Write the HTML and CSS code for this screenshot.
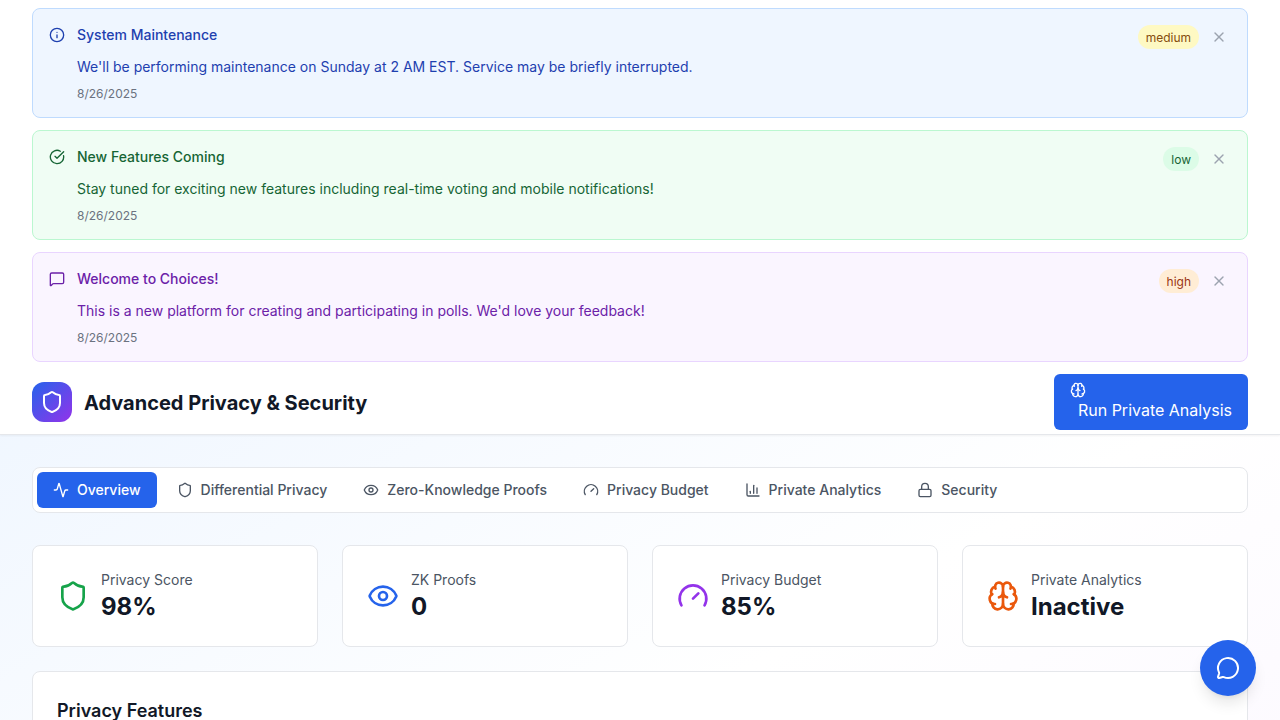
FILE: index.html
```html
<!DOCTYPE html>
<html lang="en">
<head>
<meta charset="utf-8">
<title>Advanced Privacy &amp; Security</title>
<link rel="stylesheet" href="styles.css">
</head>
<body>
<svg class="sprite" xmlns="http://www.w3.org/2000/svg">
  <symbol id="info" viewBox="0 0 24 24"><circle cx="12" cy="12" r="10"/><path d="M12 16v-4"/><path d="M12 8h.01"/></symbol>
  <symbol id="check" viewBox="0 0 24 24"><path d="M21.801 10A10 10 0 1 1 17 3.335"/><path d="m9 11 3 3L22 4"/></symbol>
  <symbol id="message" viewBox="0 0 24 24"><path d="M22 17a2 2 0 0 1-2 2H6.828a2 2 0 0 0-1.414.586l-2.202 2.202A.71.71 0 0 1 2 21.286V5a2 2 0 0 1 2-2h16a2 2 0 0 1 2 2z"/></symbol>
  <symbol id="chat" viewBox="0 0 24 24"><path d="M2.992 16.342a2 2 0 0 1 .094 1.167l-1.065 3.29a1 1 0 0 0 1.236 1.168l3.413-.998a2 2 0 0 1 1.099.092 10 10 0 1 0-4.777-4.719"/></symbol>
  <symbol id="x" viewBox="0 0 24 24"><path d="M18 6 6 18"/><path d="m6 6 12 12"/></symbol>
  <symbol id="shield" viewBox="0 0 24 24"><path d="M20 13c0 5-3.5 7.5-7.66 8.95a1 1 0 0 1-.67-.01C7.5 20.5 4 18 4 13V6a1 1 0 0 1 1-1c2 0 4.5-1.2 6.24-2.72a1.17 1.17 0 0 1 1.52 0C14.51 3.81 17 5 19 5a1 1 0 0 1 1 1z"/></symbol>
  <symbol id="brain" viewBox="0 0 24 24"><path d="M12 18V5"/><path d="M15 13a4.17 4.17 0 0 1-3-4 4.17 4.17 0 0 1-3 4"/><path d="M17.598 6.5A3 3 0 1 0 12 5a3 3 0 1 0-5.598 1.5"/><path d="M17.997 5.125a4 4 0 0 1 2.526 5.77"/><path d="M18 18a4 4 0 0 0 2-7.464"/><path d="M19.967 17.483A4 4 0 1 1 12 18a4 4 0 1 1-7.967-.517"/><path d="M6 18a4 4 0 0 1-2-7.464"/><path d="M6.003 5.125a4 4 0 0 0-2.526 5.77"/></symbol>
  <symbol id="activity" viewBox="0 0 24 24"><path d="M22 12h-2.48a2 2 0 0 0-1.93 1.46l-2.35 8.36a.25.25 0 0 1-.48 0L9.24 2.18a.25.25 0 0 0-.48 0l-2.35 8.36A2 2 0 0 1 4.49 12H2"/></symbol>
  <symbol id="eye" viewBox="0 0 24 24"><path d="M2.062 12.348a1 1 0 0 1 0-.696 10.75 10.75 0 0 1 19.876 0 1 1 0 0 1 0 .696 10.75 10.75 0 0 1-19.876 0"/><circle cx="12" cy="12" r="3"/></symbol>
  <symbol id="gauge" viewBox="0 0 24 24"><path d="m12 14 4-4"/><path d="M3.34 19a10 10 0 1 1 17.32 0"/></symbol>
  <symbol id="chart" viewBox="0 0 24 24"><path d="M3 3v16a2 2 0 0 0 2 2h16"/><path d="M18 17V9"/><path d="M13 17V5"/><path d="M8 17v-3"/></symbol>
  <symbol id="lock" viewBox="0 0 24 24"><rect width="18" height="11" x="3" y="11" rx="2"/><path d="M7 11V7a5 5 0 0 1 10 0v4"/></symbol>
</svg>

<section class="alerts">
  <article class="alert alert-blue">
    <svg class="icon alert-icon"><use href="#info"/></svg>
    <div class="alert-body">
      <h3>System Maintenance</h3>
      <p>We'll be performing maintenance on Sunday at 2 AM EST. Service may be briefly interrupted.</p>
      <time>8/26/2025</time>
    </div>
    <div class="alert-actions"><span class="badge badge-medium">medium</span><button class="close"><svg class="icon"><use href="#x"/></svg></button></div>
  </article>
  <article class="alert alert-green">
    <svg class="icon alert-icon"><use href="#check"/></svg>
    <div class="alert-body">
      <h3>New Features Coming</h3>
      <p>Stay tuned for exciting new features including real-time voting and mobile notifications!</p>
      <time>8/26/2025</time>
    </div>
    <div class="alert-actions"><span class="badge badge-low">low</span><button class="close"><svg class="icon"><use href="#x"/></svg></button></div>
  </article>
  <article class="alert alert-purple">
    <svg class="icon alert-icon"><use href="#message"/></svg>
    <div class="alert-body">
      <h3>Welcome to Choices!</h3>
      <p>This is a new platform for creating and participating in polls. We'd love your feedback!</p>
      <time>8/26/2025</time>
    </div>
    <div class="alert-actions"><span class="badge badge-high">high</span><button class="close"><svg class="icon"><use href="#x"/></svg></button></div>
  </article>
</section>

<div class="page">
  <header class="header">
    <div class="brand">
      <div class="logo"><svg class="icon icon-md"><use href="#shield"/></svg></div>
      <h1>Advanced Privacy &amp; Security</h1>
    </div>
    <button class="run"><svg class="icon"><use href="#brain"/></svg><span>Run Private Analysis</span></button>
  </header>

  <main class="content">
    <nav class="tabs">
      <button class="tab active"><svg class="icon"><use href="#activity"/></svg><span>Overview</span></button>
      <button class="tab"><svg class="icon"><use href="#shield"/></svg><span>Differential Privacy</span></button>
      <button class="tab"><svg class="icon"><use href="#eye"/></svg><span>Zero-Knowledge Proofs</span></button>
      <button class="tab"><svg class="icon"><use href="#gauge"/></svg><span>Privacy Budget</span></button>
      <button class="tab"><svg class="icon"><use href="#chart"/></svg><span>Private Analytics</span></button>
      <button class="tab"><svg class="icon"><use href="#lock"/></svg><span>Security</span></button>
    </nav>

    <div class="stats">
      <div class="card stat"><svg class="icon icon-lg green"><use href="#shield"/></svg><div><p class="label">Privacy Score</p><p class="value">98%</p></div></div>
      <div class="card stat"><svg class="icon icon-lg blue"><use href="#eye"/></svg><div><p class="label">ZK Proofs</p><p class="value">0</p></div></div>
      <div class="card stat"><svg class="icon icon-lg purple"><use href="#gauge"/></svg><div><p class="label">Privacy Budget</p><p class="value">85%</p></div></div>
      <div class="card stat"><svg class="icon icon-lg orange"><use href="#brain"/></svg><div><p class="label">Private Analytics</p><p class="value">Inactive</p></div></div>
    </div>

    <section class="card features"><h2>Privacy Features</h2></section>
  </main>
</div>

<button class="fab"><svg class="icon icon-md"><use href="#chat"/></svg></button>
</body>
</html>
```
FILE: styles.css
```css
* { box-sizing: border-box; margin: 0; padding: 0; }
html, body { height: 720px; overflow: hidden; }
body { font-family: Inter, "Liberation Sans", sans-serif; font-size: 16px; line-height: 24px; color: #111827; background: #fff; }
button { border: 0; background: none; font: inherit; color: inherit; cursor: pointer; }
.sprite { position: absolute; width: 0; height: 0; }
.icon { display: block; flex: none; width: 16px; height: 16px; fill: none; stroke: currentColor; stroke-width: 2; stroke-linecap: round; stroke-linejoin: round; }
.icon-md { width: 24px; height: 24px; }
.icon-lg { width: 32px; height: 32px; }

.alerts { display: flex; flex-direction: column; gap: 12px; padding: 8px 32px; }
.alert { display: flex; align-items: flex-start; gap: 12px; padding: 16px; border: 1px solid; border-radius: 8px; }
.alert-icon { margin-top: 2px; }
.alert-body { flex: 1; }
.alert h3 { font-size: 14px; line-height: 20px; font-weight: 500; margin-bottom: 12px; }
.alert p { font-size: 14px; line-height: 20px; margin-bottom: 8px; }
.alert time { display: block; padding-top: 1px; font-size: 12px; line-height: 15px; color: #6b7280; padding-top: 2px; line-height: 14px; }
.alert-blue { background: #eff6ff; border-color: #bfdbfe; color: #1e40af; }
.alert-green { background: #f0fdf4; border-color: #bbf7d0; color: #166534; }
.alert-purple { background: #faf5ff; border-color: #e9d5ff; color: #6b21a8; }
.alert-actions { display: flex; align-items: center; gap: 8px; }
.badge { padding: 5px 8px 3px; border-radius: 12px; font-size: 12px; line-height: 16px; }
.badge-medium { background: #fef9c3; color: #854d0e; }
.badge-low { background: #dcfce7; color: #166534; }
.badge-high { background: #ffedd5; color: #9a3412; }
.close { padding: 4px; color: #9ca3af; }

.page { height: 720px; background: linear-gradient(to bottom right, #eff6ff, #fff, #faf5ff); }
.header { display: flex; align-items: center; justify-content: space-between; height: 65px; padding: 0 32px; background: #fff; border-bottom: 1px solid #e5e7eb; box-shadow: 0 1px 2px rgba(0, 0, 0, .05); }
.brand { display: flex; align-items: center; gap: 12px; }
.logo { display: flex; align-items: center; justify-content: center; width: 40px; height: 40px; border-radius: 12px; color: #fff; background: linear-gradient(to bottom right, #2563eb, #9333ea); }
h1 { padding-top: 2px; font-size: 20px; line-height: 28px; font-weight: 700; }
.run { padding: 8px 16px; border-radius: 6px; background: #2563eb; color: #fff; font-weight: 400; }
.run span { display: block; margin-left: 8px; }

.content { padding: 32px; }
.tabs { display: flex; gap: 4px; padding: 4px; margin-bottom: 32px; background: #fff; border: 1px solid #e5e7eb; border-radius: 8px; }
.tab { display: flex; align-items: center; gap: 8px; padding: 8px 16px; border-radius: 6px; font-size: 14px; line-height: 20px; font-weight: 500; color: #4b5563; }
.tab.active { background: #2563eb; color: #fff; }

.card { background: #fff; border: 1px solid #e5e7eb; border-radius: 8px; padding: 24px; }
.stats { display: grid; grid-template-columns: repeat(4, 1fr); gap: 24px; margin-bottom: 24px; }
.stat { display: flex; align-items: center; gap: 12px; }
.label { font-size: 14px; line-height: 20px; color: #4b5563; }
.value { padding-top: 2px; font-size: 24px; line-height: 30px; font-weight: 700; }
.green { color: #16a34a; }
.blue { color: #2563eb; }
.purple { color: #9333ea; }
.orange { color: #ea580c; }
.features { height: 340px; }
h2 { padding-top: 1px; font-size: 18px; line-height: 28px; font-weight: 600; }

.fab { position: fixed; right: 24px; bottom: 24px; display: flex; align-items: center; justify-content: center; width: 56px; height: 56px; border-radius: 50%; background: #2563eb; color: #fff; box-shadow: 0 10px 15px -3px rgba(0, 0, 0, .1), 0 4px 6px -4px rgba(0, 0, 0, .1); }
```
